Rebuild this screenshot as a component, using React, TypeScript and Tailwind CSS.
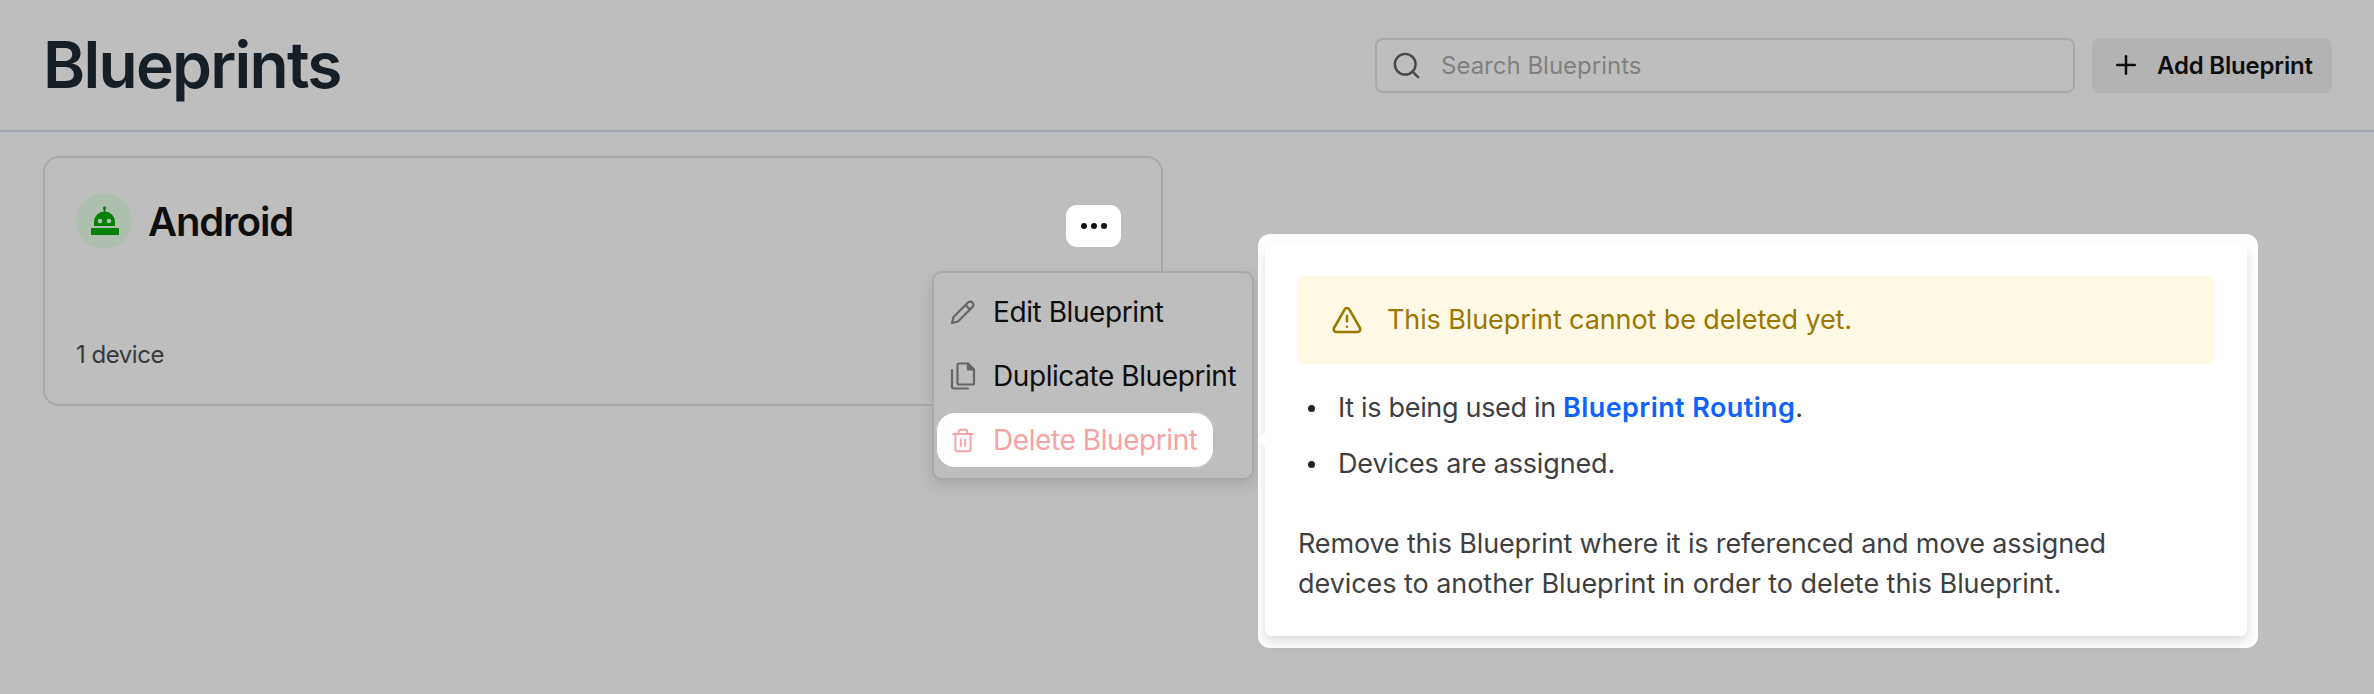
import React from "react";
import { Plus, Search, Trash2, TriangleAlert } from "lucide-react";

const BotIcon = () => (
  <svg width="56" height="56" viewBox="0 0 56 56" fill="#058205">
    <rect x="15" y="35" width="28" height="7" />
    <path d="M18 33v-4a10.5 10.5 0 0 1 21 0v4z" />
    <rect x="27.6" y="15" width="1.8" height="5" />
    <circle cx="28.5" cy="15" r="1.6" />
    <circle cx="24" cy="28" r="2.3" fill="#afbfaf" />
    <circle cx="33" cy="28" r="2.3" fill="#afbfaf" />
  </svg>
);

const PencilIcon = () => (
  <svg width="26" height="26" viewBox="0 0 26 26" fill="none" stroke="#666" strokeWidth="2.2" strokeLinejoin="round" strokeLinecap="round">
    <path d="M2 24l1.500-6L18 3.500a3 3 0 0 1 4.500 4.500L8 22.500z" />
    <path d="M15.500 6l4.500 4.500" />
  </svg>
);

const DuplicateIcon = () => (
  <svg width="26" height="28" viewBox="0 0 26 28" fill="none" stroke="#666" strokeWidth="2.2" strokeLinejoin="round" strokeLinecap="round">
    <path d="M9 1.500h9l6 6v13.500a1.500 1.500 0 0 1-1.500 1.500H9A1.500 1.500 0 0 1 7.500 21V3A1.500 1.500 0 0 1 9 1.500z" />
    <path d="M18 1.500v6h6" fill="#666" />
    <path d="M2 8v17a1.500 1.500 0 0 0 1.500 1.500H18" />
  </svg>
);

const MenuItem = ({ icon, label, active }: { icon: React.ReactNode; label: string; active?: boolean }) => (
  <div
    className={`flex items-center gap-[17px] h-[54px] pl-[13px] pr-[15px] rounded-[18px] self-start ${
      active ? "bg-white text-[#f5a3a3]" : "text-[#0e0e0e]"
    }`}
  >
    <span className="w-[26px] flex justify-center">{icon}</span>
    <span className="text-[28px] tracking-[-0.015em] whitespace-nowrap">{label}</span>
  </div>
);

export default function App() {
  return (
    <div className="relative w-[2374px] h-[694px] overflow-hidden bg-[#bebebe] font-['Inter',sans-serif]">
      <header className="h-[132px] pl-[43px] pr-[42px] flex items-center justify-between border-b-2 border-[#a0a8b5]">
        <h1 className="text-[64px] font-semibold leading-none tracking-[-0.027em] text-[#161e26]">Blueprints</h1>
        <div className="flex items-center gap-[17px]">
          <div className="w-[700px] h-[55px] flex items-center gap-[19px] pl-[14px] rounded-[8px] border-2 border-[#a9a9a9]">
            <Search size={31} strokeWidth={1.9} color="#4a4a4a" />
            <span className="text-[24px] text-[#808080] mt-[2px]">Search Blueprints</span>
          </div>
          <button className="w-[240px] h-[55px] flex items-center gap-[16px] pl-[19px] rounded-[8px] bg-[#b3b3b3] text-[#0e0e0e]">
            <Plus size={30} strokeWidth={2} />
            <span className="text-[24px] font-semibold tracking-[-0.008em] whitespace-nowrap mt-[1px]">Add Blueprint</span>
          </button>
        </div>
      </header>

      <main className="px-[43px] pt-[24px]">
        <div className="w-[1120px] h-[250px] rounded-[16px] border-2 border-[#a9a9a9] pl-[31px] pr-[40px] pt-[32px] pb-[33px] flex flex-col justify-between">
          <div className="flex items-start justify-between">
            <div className="flex items-center gap-[16px]">
              <div className="w-[56px] h-[56px] rounded-full bg-[#afbfaf]">
                <BotIcon />
              </div>
              <span className="text-[40px] font-semibold tracking-[-0.03em] text-[#0e0e0e] mt-[2px]">Android</span>
            </div>
            <button className="w-[55px] h-[42px] mt-[15px] rounded-[11px] bg-white flex items-center justify-center gap-[4px]">
              <span className="w-[6px] h-[6px] rounded-full bg-[#111]" />
              <span className="w-[6px] h-[6px] rounded-full bg-[#111]" />
              <span className="w-[6px] h-[6px] rounded-full bg-[#111]" />
            </button>
          </div>
          <span className="text-[24px] leading-[32px] tracking-[-0.02em] text-[#3a3a3a]">1 device</span>
        </div>
      </main>

      <div className="absolute left-[932px] top-[271px] w-[322px] h-[209px] rounded-[10px] border-2 border-[#a9a9a9] bg-[#bebebe] shadow-[0_6px_14px_rgba(0,0,0,0.12)] pl-[3px] pt-[12px] flex flex-col gap-[10px]">
        <MenuItem icon={<PencilIcon />} label="Edit Blueprint" />
        <MenuItem icon={<DuplicateIcon />} label="Duplicate Blueprint" />
        <MenuItem icon={<Trash2 size={31} strokeWidth={1.8} color="#f5a3a3" />} label="Delete Blueprint" active />
      </div>

      <div className="absolute left-[1258px] top-[234px] w-[1000px] h-[414px] rounded-[12px] bg-white pl-[7px] pt-[10px]">
        <div className="relative w-[982px] h-[392px] rounded-[6px] bg-white shadow-[0_6px_12px_rgba(0,0,0,0.14)] px-[33px] pt-[32px] text-[#3f3f3f]">
          <span className="absolute left-[-5px] top-[190px] w-[11px] h-[11px] rotate-45 bg-white" />
          <div className="h-[88px] rounded-[8px] bg-[#fff9e5] flex items-center gap-[24px] pl-[33px] text-[#9a7700]">
            <TriangleAlert size={32} strokeWidth={1.9} />
            <span className="text-[27px] tracking-[-0.004em]">This Blueprint cannot be deleted yet.</span>
          </div>
          <ul className="mt-[24px] flex flex-col gap-[16px] text-[27px] leading-[40px] tracking-[-0.006em]">
            <li className="flex items-center gap-[23px] pl-[10px]">
              <span className="w-[7px] h-[7px] rounded-full bg-[#222]" />
              <span>
                <span className="tracking-[-0.012em]">It is being used in </span>
                <a className="font-semibold tracking-[0.015em] text-[#0f62fe]">Blueprint Routing</a>.
              </span>
            </li>
            <li className="flex items-center gap-[23px] pl-[10px]">
              <span className="w-[7px] h-[7px] rounded-full bg-[#222]" />
              <span>Devices are assigned.</span>
            </li>
          </ul>
          <p className="mt-[40px] text-[27px] leading-[40px] tracking-[-0.006em]">
            Remove this Blueprint where it is referenced and move assigned
            <br />
            <span className="tracking-[-0.002em]">devices to another Blueprint in order to delete this Blueprint.</span>
          </p>
        </div>
      </div>
    </div>
  );
}
